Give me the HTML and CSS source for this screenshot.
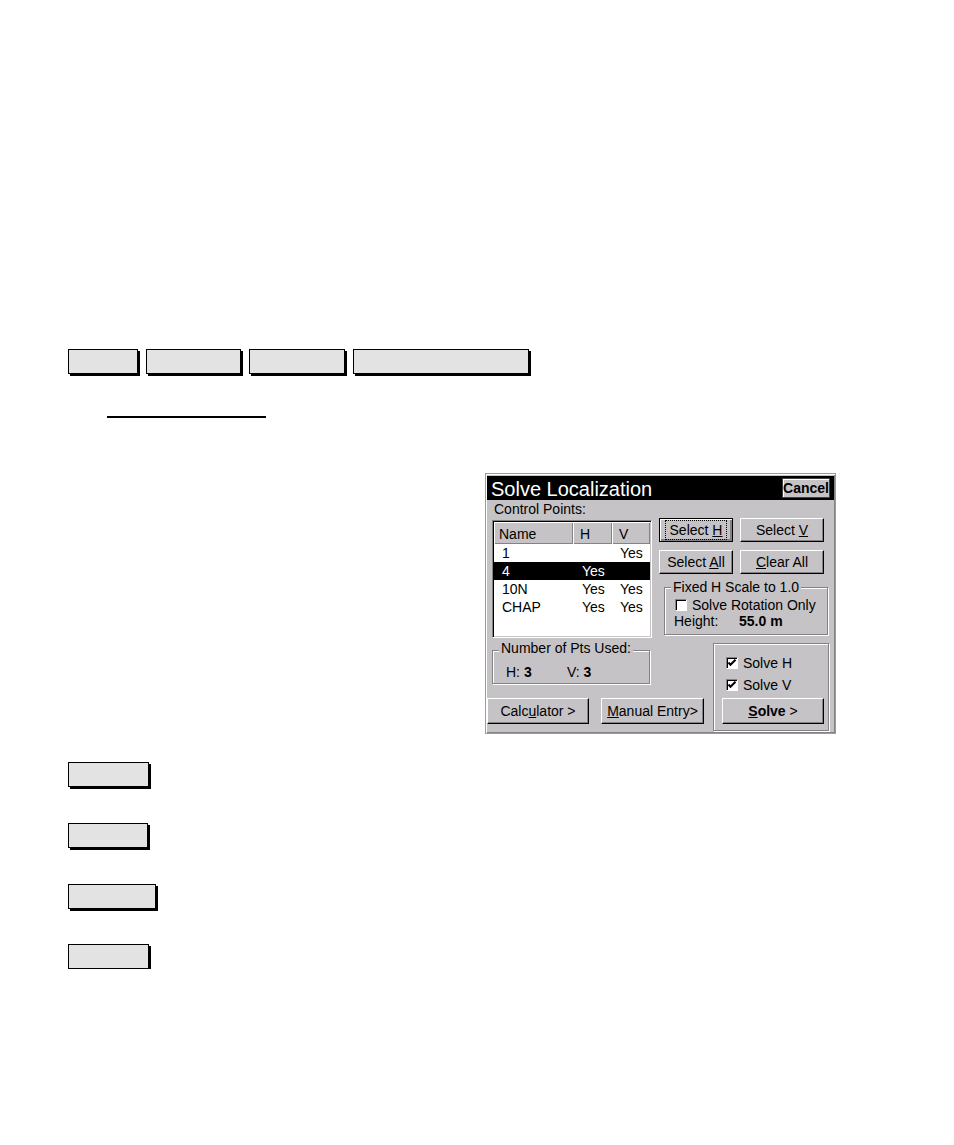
FILE: index.html
```html
<!DOCTYPE html>
<html>
<head>
<meta charset="utf-8">
<title>Solve Localization</title>
<link rel="stylesheet" href="styles.css">
</head>
<body>
<div class="page">
  <div class="tabs">
    <div class="box w-a"></div>
    <div class="box w-b"></div>
    <div class="box w-c"></div>
    <div class="box w-d"></div>
  </div>
  <div class="rule"></div>

  <div class="dialog">
    <div class="titlebar">
      <span class="title">Solve Localization</span>
      <span class="cancel">Cancel</span>
    </div>
    <div class="content">
      <div class="leftcol">
        <div class="label">Control Points:</div>
        <div class="listbox">
          <div class="lrow head"><span class="c1">Name</span><span class="c2">H</span><span class="c3">V</span></div>
          <div class="lrow"><span class="c1">1</span><span class="c2"></span><span class="c3">Yes</span></div>
          <div class="lrow sel"><span class="c1">4</span><span class="c2">Yes</span><span class="c3"></span></div>
          <div class="lrow"><span class="c1">10N</span><span class="c2">Yes</span><span class="c3">Yes</span></div>
          <div class="lrow"><span class="c1">CHAP</span><span class="c2">Yes</span><span class="c3">Yes</span></div>
        </div>
        <div class="group grp-pts">
          <div class="legend">Number of Pts Used:</div>
          <div class="pts"><span class="pt-h">H: <b>3</b></span><span>V: <b>3</b></span></div>
        </div>
        <div class="brow bottom">
          <div class="btn calc"><span>Calc<u>u</u>lator &gt;</span></div>
          <div class="btn manual"><span><u>M</u>anual Entry&gt;</span></div>
        </div>
      </div>

      <div class="rightcol">
        <div class="brow first">
          <div class="btn focus sel-h"><span class="focusrect">Select <u>H</u></span></div>
          <div class="btn sel-v"><span>Select <u>V</u></span></div>
        </div>
        <div class="brow second">
          <div class="btn sel-h"><span>Select <u>A</u>ll</span></div>
          <div class="btn sel-v"><span><u>C</u>lear All</span></div>
        </div>
        <div class="group grp-fix">
          <div class="legend">Fixed H Scale to 1.0</div>
          <div class="chkrow"><span class="cb"></span><span>Solve Rotation Only</span></div>
          <div class="hrow"><span class="hlabel">Height:</span><b>55.0 m</b></div>
        </div>
        <div class="group grp-solve">
          <div class="chkrow r1"><span class="cb"><svg width="10" height="10" viewBox="0 0 10 10"><polyline points="1.5,4.5 3.5,6.8 8.5,1.8" fill="none" stroke="#000" stroke-width="2"/></svg></span><span>Solve H</span></div>
          <div class="chkrow r2"><span class="cb"><svg width="10" height="10" viewBox="0 0 10 10"><polyline points="1.5,4.5 3.5,6.8 8.5,1.8" fill="none" stroke="#000" stroke-width="2"/></svg></span><span>Solve V</span></div>
          <div class="btn solve"><span><b><u>S</u>olve</b> &gt;</span></div>
        </div>
      </div>
    </div>
  </div>

  <div class="box b1"></div>
  <div class="box b2"></div>
  <div class="box b3"></div>
  <div class="box b4"></div>
</div>
</body>
</html>
```
FILE: styles.css
```css
body {
  margin: 0;
  background: #fff;
  font-family: "Liberation Sans", Arial, sans-serif;
}

.page {
  padding: 349px 0 0 68px;
}

.tabs {
  display: flex;
  gap: 8px;
}

.box {
  height: 25px;
  box-sizing: border-box;
  border: 1px solid #000;
  background: #e3e3e3;
  box-shadow: 2px 2px 0 #000;
}

.w-a { width: 70px; }
.w-b { width: 95px; }
.w-c { width: 96px; }
.w-d { width: 176px; }

.rule {
  margin: 42px 0 0 39px;
  width: 159px;
  border-top: 2px solid #000;
}

.b1 { margin-top: 28px; width: 81px; }
.b2 { margin-top: 36px; width: 80px; }
.b3 { margin-top: 36px; width: 88px; }
.b4 { margin-top: 35px; width: 81px; }

/* dialog */
.dialog {
  margin: 55px 0 0 417px;
  width: 351px;
  height: 261px;
  box-sizing: border-box;
  border: 1px solid #9c9a9c;
  padding: 1px;
  background: #c6c3c6;
  box-shadow: inset 1px 1px 0 #fff, inset -1px -1px 0 #848284;
  font-size: 14px;
  color: #000;
}

.titlebar {
  margin-top: 1px;
  height: 24px;
  background: #000;
  display: flex;
  align-items: center;
  justify-content: space-between;
  padding: 0 4px;
}

.title {
  color: #fff;
  font-size: 20px;
  line-height: 22px;
  padding-top: 2px;
}

.cancel {
  width: 48px;
  height: 20px;
  box-sizing: border-box;
  border: 1px solid #424142;
  box-shadow: inset 1px 1px 0 #fff;
  background: #c6c3c6;
  font-weight: bold;
  font-size: 14px;
  display: flex;
  align-items: center;
  justify-content: center;
}

.content {
  display: grid;
  grid-template-columns: 172px 45px 130px;
}

.leftcol {
  grid-column: 1 / 3;
  grid-row: 1;
  display: flex;
  flex-direction: column;
  align-items: flex-start;
}

.rightcol {
  grid-column: 2 / 4;
  grid-row: 1;
  display: flex;
  flex-direction: column;
  align-items: flex-start;
}

.label {
  height: 20px;
  box-sizing: border-box;
  padding: 1px 0 0 7px;
  line-height: 16px;
}

.listbox {
  margin-left: 5px;
  width: 160px;
  height: 118px;
  box-sizing: border-box;
  border: 1px solid;
  border-color: #848284 #fff #fff #848284;
  box-shadow: inset 1px 1px 0 #000, inset -1px -1px 0 #c6c3c6;
  padding: 1px;
  background: #fff;
}

.lrow {
  display: grid;
  grid-template-columns: 79px 39px 38px;
  height: 18px;
  line-height: 18px;
}

.lrow .c1 { padding-left: 8px; }
.lrow .c2 { padding-left: 9px; }
.lrow .c3 { padding-left: 8px; }

.lrow.head {
  height: 22px;
  line-height: 16px;
  background: #c6c3c6;
}

.lrow.head span {
  padding-top: 4px;
  box-shadow: inset 1px 1px 0 #fff, inset -1px -1px 0 #848284;
}

.lrow.head .c1 { padding-left: 5px; }
.lrow.head .c2 { padding-left: 7px; }
.lrow.head .c3 { padding-left: 7px; }

.lrow.sel {
  background: #000;
  color: #fff;
}

/* group boxes */
.group {
  box-sizing: border-box;
  border: 1px solid #848284;
  box-shadow: inset 1px 1px 0 #fff, 1px 1px 0 #fff;
  display: flex;
  flex-direction: column;
  align-items: flex-start;
}

.legend {
  background: #c6c3c6;
  padding: 0 2px;
  margin-left: 6px;
  line-height: 16px;
}

.grp-pts {
  margin: 12px 0 0 5px;
  width: 158px;
  height: 34px;
}

.grp-pts .legend { margin-top: -11px; }

.pts {
  margin-top: 8px;
  padding-left: 13px;
  line-height: 16px;
  display: flex;
}

.pt-h { width: 61px; }

.grp-fix {
  margin: 13px 0 0 5px;
  width: 164px;
  height: 48px;
}

.grp-fix .legend { margin-top: -9px; }

.chkrow {
  display: flex;
  align-items: center;
  gap: 5px;
  height: 16px;
  line-height: 16px;
}

.grp-fix .chkrow { margin: 2px 0 0 10px; }

.hrow {
  margin-left: 9px;
  line-height: 16px;
}

.hlabel {
  display: inline-block;
  width: 65px;
}

.grp-solve {
  margin: 8px 0 0 54px;
  width: 116px;
  height: 88px;
}

.grp-solve .chkrow { margin-left: 12px; }
.grp-solve .r1 { margin-top: 11px; }
.grp-solve .r2 { margin-top: 6px; }

.cb {
  flex: none;
  width: 12px;
  height: 12px;
  box-sizing: border-box;
  border: 1px solid;
  border-color: #848284 #fff #fff #848284;
  box-shadow: inset 1px 1px 0 #000;
  background: #fff;
  display: flex;
}

/* buttons */
.brow {
  display: flex;
}

.brow.first { margin-top: 18px; gap: 7px; }
.brow.second { margin-top: 8px; gap: 7px; }
.brow.bottom { margin-top: 14px; gap: 12px; }

.btn {
  height: 24px;
  box-sizing: border-box;
  border: 1px solid;
  border-color: #fff #000 #000 #fff;
  box-shadow: inset -1px -1px 0 #848284;
  background: #c6c3c6;
  display: flex;
  align-items: center;
  justify-content: center;
  line-height: 16px;
  white-space: nowrap;
}

.btn.focus {
  border-color: #000;
  box-shadow: inset 1px 1px 0 #fff, inset -2px -2px 0 #848284;
}

.focusrect {
  outline: 1px dotted #000;
  outline-offset: 1px;
  padding: 0 3px;
}

.sel-h { width: 74px; }
.sel-v { width: 84px; }

.calc { width: 102px; height: 26px; }
.manual { width: 103px; height: 26px; }

.solve {
  margin: 5px 0 0 8px;
  width: 102px;
  height: 26px;
}
```
